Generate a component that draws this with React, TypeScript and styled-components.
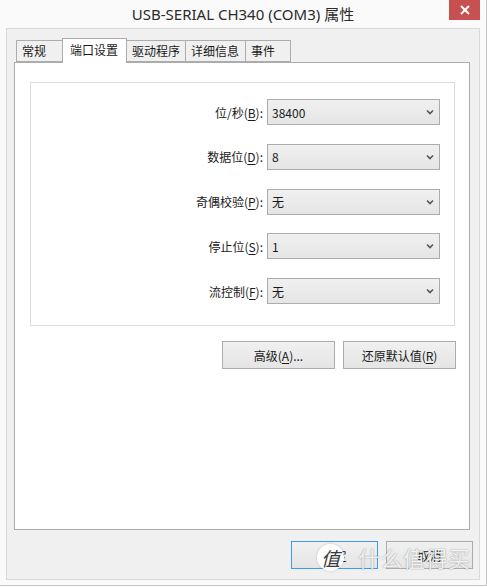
import React from "react";
import styled, { createGlobalStyle } from "styled-components";

const Global = createGlobalStyle`
  html, body { margin: 0; padding: 0; background: #ffffff; }
  body { font-family: "Noto Sans CJK SC", "Noto Sans", sans-serif; font-size: 12px; color: #1a1a1a; }
  * { box-sizing: border-box; }
`;

const Window = styled.div`
  position: relative;
  width: 487px;
  height: 586px;
  background: #fafafa;
  border-right: 1px solid #c6c6c6;
  border-bottom: 1px solid #c6c6c6;
  display: flex;
  flex-direction: column;
  padding: 0 6px 5px 6px;
  overflow: hidden;
`;

const TitleBar = styled.div`
  height: 28px;
  margin: 0 -6px;
  display: grid;
  grid-template-columns: 1fr auto 1fr;
  align-items: start;
`;

const Title = styled.div`
  grid-column: 2;
  line-height: 28px;
  font-family: "Noto Sans", "Noto Sans CJK SC", sans-serif;
  font-size: 15px;
  color: #2b2b2b;
  white-space: nowrap;
`;

const CloseButton = styled.div`
  grid-column: 3;
  justify-self: end;
  margin-right: 6px;
  width: 31px;
  height: 20px;
  background: #c75050;
  display: flex;
  align-items: center;
  justify-content: center;
`;

const Panel = styled.div`
  flex: 1;
  border: 1px solid #d9d9d9;
  background: #f0f0f0;
  display: flex;
  flex-direction: column;
  padding: 9px 6px 10px 7px;
`;

const TabStrip = styled.div`
  height: 24px;
  display: flex;
  align-items: flex-end;
  padding-left: 2px;
  position: relative;
  z-index: 1;
`;

const Tab = styled.div<{ $w: number; $active?: boolean }>`
  width: ${(p) => p.$w}px;
  height: ${(p) => (p.$active ? 25 : 22)}px;
  margin-left: -1px;
  margin-bottom: ${(p) => (p.$active ? -1 : 0)}px;
  &:first-child { margin-left: 0; }
  border: 1px solid #acacac;
  border-bottom: ${(p) => (p.$active ? "none" : "1px solid #acacac")};
  background: ${(p) => (p.$active ? "#ffffff" : "#f0f0f0")};
  padding-left: ${(p) => (p.$active ? 7 : 5)}px;
  padding-top: ${(p) => (p.$active ? 1 : 0)}px;
  line-height: 20px;
  font-size: 12px;
  color: #1a1a1a;
  white-space: nowrap;
  position: relative;
  z-index: ${(p) => (p.$active ? 2 : 0)};
`;

const ContentBox = styled.div`
  height: 468px;
  margin-right: 3px;
  border: 1px solid #acacac;
  background: #ffffff;
  padding: 19px 0 0 15px;
  display: flex;
  flex-direction: column;
  align-items: flex-start;
`;

const GroupBox = styled.div`
  width: 425px;
  height: 244px;
  border: 1px solid #dcdcdc;
  padding: 16px 14px 0 0;
  display: flex;
  flex-direction: column;
  gap: 18.75px;
`;

const Row = styled.div`
  display: flex;
  justify-content: flex-end;
  align-items: center;
  gap: 4px;
`;

const Label = styled.span`
  font-size: 12px;
  color: #1a1a1a;
  white-space: nowrap;
`;

const Key = styled.span`
  text-decoration: underline;
  text-underline-offset: 2px;
`;

const Select = styled.div`
  width: 173px;
  height: 26px;
  border: 1px solid #acacac;
  background: linear-gradient(to bottom, #f0f0f0, #e5e5e5);
  display: flex;
  align-items: center;
  justify-content: space-between;
  padding: 0 5px 0 4px;
  font-size: 12px;
  color: #1a1a1a;
`;

const ButtonRow = styled.div<{ $width?: number }>`
  display: flex;
  justify-content: flex-end;
  gap: 8px;
  width: ${(p) => (p.$width ? `${p.$width}px` : "auto")};
`;

const ActionRow = styled(ButtonRow)`
  margin-top: 15px;
`;

const Footer = styled(ButtonRow)`
  margin-top: 11px;
`;

const Button = styled.div<{ $w: number; $focused?: boolean }>`
  width: ${(p) => p.$w}px;
  height: 28px;
  border: 1px solid ${(p) => (p.$focused ? "#3c9aef" : "#acacac")};
  background: linear-gradient(to bottom, #f0f0f0, #e5e5e5);
  display: flex;
  align-items: center;
  justify-content: center;
  font-size: 12px;
  color: #1a1a1a;
  white-space: nowrap;
`;

const WatermarkBadge = styled.div`
  position: absolute;
  left: 317px;
  top: 544px;
  width: 27px;
  height: 27px;
  border-radius: 50%;
  background: rgba(255, 255, 255, 0.95);
  box-shadow: 0 0 2px rgba(0, 0, 0, 0.25);
  display: flex;
  align-items: center;
  justify-content: center;
  font-size: 19px;
  font-style: italic;
  color: #3a3a3a;
  line-height: 1;
`;

const WatermarkText = styled.div`
  position: absolute;
  left: 358px;
  top: 543px;
  font-size: 22px;
  line-height: 28px;
  letter-spacing: 0.5px;
  color: rgba(255, 255, 255, 0.88);
  text-shadow: 0 0 1px rgba(0, 0, 0, 0.35), 0 0 2px rgba(0, 0, 0, 0.15);
  white-space: nowrap;
`;

const Chevron = () => (
  <svg width="8" height="6" viewBox="0 0 8 6">
    <polyline points="1,1.5 4,4.5 7,1.5" fill="none" stroke="#555" strokeWidth="1.6" />
  </svg>
);

const CloseIcon = () => (
  <svg width="10" height="10" viewBox="0 0 10 10">
    <line x1="1" y1="1" x2="9" y2="9" stroke="#fff" strokeWidth="2" />
    <line x1="9" y1="1" x2="1" y2="9" stroke="#fff" strokeWidth="2" />
  </svg>
);

const tabs = [
  { label: "常规", w: 47 },
  { label: "端口设置", w: 65, active: true },
  { label: "驱动程序", w: 60 },
  { label: "详细信息", w: 61 },
  { label: "事件", w: 46 },
];

const fields = [
  { pre: "位/秒(", key: "B", value: "38400" },
  { pre: "数据位(", key: "D", value: "8" },
  { pre: "奇偶校验(", key: "P", value: "无" },
  { pre: "停止位(", key: "S", value: "1" },
  { pre: "流控制(", key: "F", value: "无" },
];

export default function App() {
  return (
    <>
      <Global />
      <Window>
        <TitleBar>
          <Title>USB-SERIAL CH340 (COM3) 属性</Title>
          <CloseButton>
            <CloseIcon />
          </CloseButton>
        </TitleBar>
        <Panel>
          <TabStrip>
            {tabs.map((t) => (
              <Tab key={t.label} $w={t.w} $active={t.active}>
                {t.label}
              </Tab>
            ))}
          </TabStrip>
          <ContentBox>
            <GroupBox>
              {fields.map((f) => (
                <Row key={f.key}>
                  <Label>
                    {f.pre}
                    <Key>{f.key}</Key>):
                  </Label>
                  <Select>
                    <span>{f.value}</span>
                    <Chevron />
                  </Select>
                </Row>
              ))}
            </GroupBox>
            <ActionRow $width={426}>
              <Button $w={113}>
                高级(<Key>A</Key>)...
              </Button>
              <Button $w={113}>
                还原默认值(<Key>R</Key>)
              </Button>
            </ActionRow>
          </ContentBox>
          <Footer>
            <Button $w={87} $focused>
              确定
            </Button>
            <Button $w={87}>取消</Button>
          </Footer>
        </Panel>
        <WatermarkBadge>值</WatermarkBadge>
        <WatermarkText>什么值得买</WatermarkText>
      </Window>
    </>
  );
}
